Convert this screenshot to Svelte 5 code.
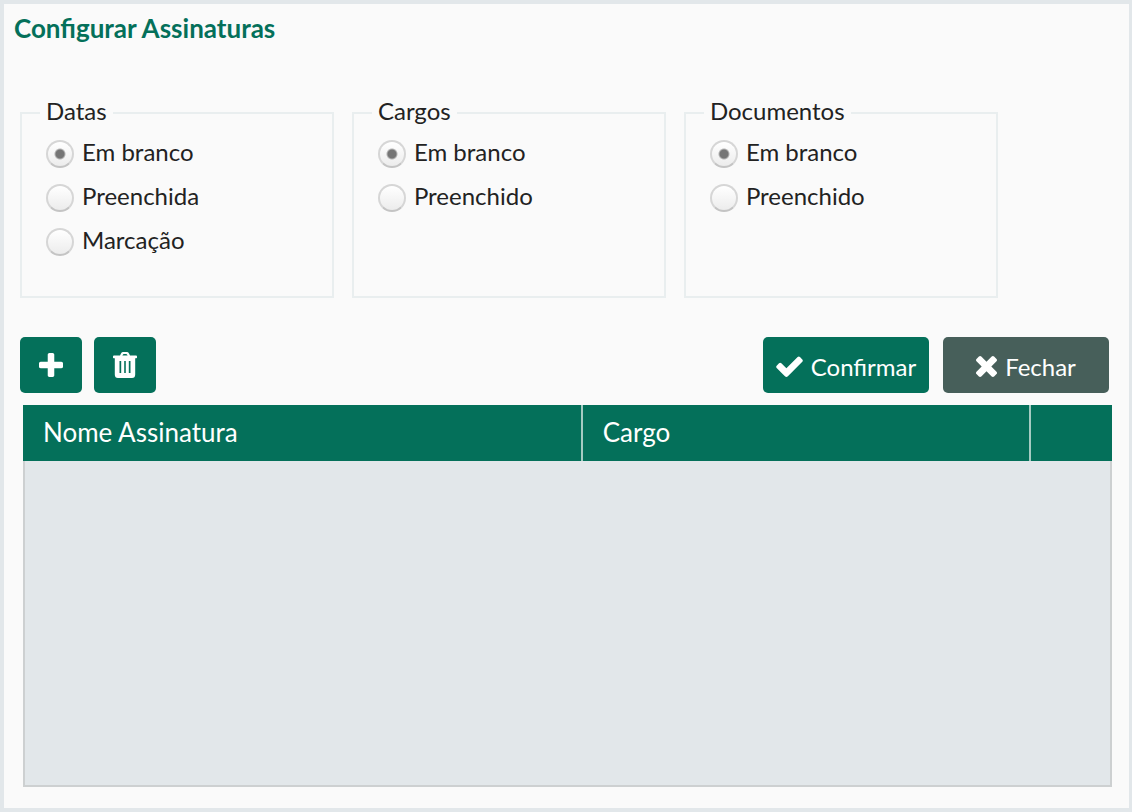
<script>
  const groups = [
    { name: 'datas', title: 'Datas', options: ['Em branco', 'Preenchida', 'Marcação'] },
    { name: 'cargos', title: 'Cargos', options: ['Em branco', 'Preenchido'] },
    { name: 'documentos', title: 'Documentos', options: ['Em branco', 'Preenchido'] }
  ];
  let selected = $state({ datas: 'Em branco', cargos: 'Em branco', documentos: 'Em branco' });
</script>

<main class="dialog">
  <h1>Configurar Assinaturas</h1>

  <div class="groups">
    {#each groups as group}
      <fieldset>
        <legend>{group.title}</legend>
        {#each group.options as option}
          <label>
            <input type="radio" name={group.name} value={option} bind:group={selected[group.name]} />
            <span>{option}</span>
          </label>
        {/each}
      </fieldset>
    {/each}
  </div>

  <div class="toolbar">
    <div class="tools">
      <button type="button" class="square" aria-label="Adicionar">
        <svg width="24" height="24" viewBox="192 128 1408 1408" aria-hidden="true"><path d="M1600 736v192q0 40-28 68t-68 28h-416v416q0 40-28 68t-68 28h-192q-40 0-68-28t-28-68v-416h-416q-40 0-68-28t-28-68v-192q0-40 28-68t68-28h416v-416q0-40 28-68t68-28h192q40 0 68 28t28 68v416h416q40 0 68 28t28 68z" /></svg>
      </button>
      <button type="button" class="square" aria-label="Excluir">
        <svg width="24" height="26" viewBox="0 0 24 26" aria-hidden="true"><path fill-rule="evenodd" d="M7 3.500L8 1.400Q8.700 0 10.200 0H13.800Q15.300 0 16 1.400L17 3.500H23Q24 3.500 24 4.500V5.500Q24 6.300 23.300 6.300H22.200V22.500Q22.200 26 19 26H5Q1.800 26 1.800 22.500V6.300H.7Q0 6.300 0 5.500V4.500Q0 3.500 1 3.500ZM9.400 3.500H14.600L14 2.400Q13.800 2 13.300 2H10.700Q10.200 2 10 2.400ZM6.500 9V21H8.200V9ZM11.200 9V21H12.800V9ZM15.800 9V21H17.500V9Z" /></svg>
      </button>
    </div>
    <div class="actions-bar">
      <button type="button" class="wide">
        <svg width="27" height="21" viewBox="121 298 1550 1224" aria-hidden="true"><path d="M1671 566q0 40-28 68l-724 724-136 136q-28 28-68 28t-68-28l-136-136-362-362q-28-28-28-68t28-68l136-136q28-28 68-28t68 28l294 295 656-657q28-28 68-28t68 28l136 136q28 28 28 68z" /></svg>
        Confirmar
      </button>
      <button type="button" class="wide close">
        <svg width="21" height="21" viewBox="302 366 1188 1188" aria-hidden="true"><path d="M1490 1322q0 40-28 68l-136 136q-28 28-68 28t-68-28l-294-294-294 294q-28 28-68 28t-68-28l-136-136q-28-28-28-68t28-68l294-294-294-294q-28-28-28-68t28-68l136-136q28-28 68-28t68 28l294 294 294-294q28-28 68-28t68 28l136 136q28 28 28 68t-28 68l-294 294 294 294q28 28 28 68z" /></svg>
        Fechar
      </button>
    </div>
  </div>

  <div class="grid">
    <table>
      <colgroup><col class="name" /><col class="role" /><col /></colgroup>
      <thead>
        <tr><th>Nome Assinatura</th><th>Cargo</th><th></th></tr>
      </thead>
      <tbody></tbody>
    </table>
  </div>
</main>

<style>
  :global(body) {
    margin: 0;
    background: #fafafa;
  }
  .dialog {
    box-sizing: border-box;
    min-height: 100vh;
    display: flex;
    flex-direction: column;
    padding: 8px 17px 21px 16px;
    border: 4px solid #e2e7ea;
    border-right-width: 3px;
    background: #fafafa;
    color: #222;
    font: 24px/32px Lato, sans-serif;
  }
  h1 {
    margin: 0 0 51px -6px;
    color: #04705a;
    font-size: 26px;
    line-height: 32px;
    font-weight: 700;
  }
  .groups {
    display: grid;
    grid-template-columns: repeat(3, 28.75%);
    gap: 18px;
  }
  fieldset {
    box-sizing: border-box;
    min-width: 0;
    min-height: 203px;
    margin: 0;
    padding: 1px 24px 32px;
    border: 2px solid #e9eeef;
  }
  legend {
    margin-left: -6px;
    padding: 0 6px 4px;
  }
  label {
    display: flex;
    align-items: center;
    gap: 8px;
    height: 44px;
  }
  label span {
    padding-bottom: 4px;
  }
  input {
    appearance: none;
    width: 28px;
    height: 28px;
    flex: none;
    margin: 0;
    border: 2px solid #d6d6d6;
    border-bottom-color: #c4c4c4;
    border-radius: 50%;
    background: linear-gradient(#fff, #ececec);
  }
  input:checked {
    background: radial-gradient(circle, #757575 4px, transparent 6px), linear-gradient(#fff, #ececec);
  }
  .toolbar {
    display: flex;
    justify-content: space-between;
    margin: 39px 3px 12px 0;
  }
  .tools {
    display: flex;
    gap: 12px;
  }
  .actions-bar {
    display: flex;
    gap: 14px;
  }
  button {
    display: flex;
    align-items: center;
    justify-content: center;
    gap: 8px;
    height: 56px;
    padding: 0;
    border: 0;
    border-radius: 5px;
    background: #04705a;
    color: #fff;
    font: inherit;
  }
  .square {
    width: 62px;
  }
  .wide {
    width: 166px;
    padding-top: 3px;
  }
  .close {
    background: #475f5a;
  }
  svg {
    fill: currentColor;
  }
  .grid {
    flex: 1;
    min-height: 200px;
    margin-left: 3px;
    border: 2px solid #cdd0d1;
    border-top: 0;
    background: #e2e7ea;
  }
  table {
    width: calc(100% + 4px);
    margin: 0 -2px;
    border-collapse: separate;
    border-spacing: 0;
    table-layout: fixed;
    background: #04705a;
    color: #fff;
  }
  .name {
    width: 51.4%;
  }
  .role {
    width: 41.2%;
  }
  th {
    height: 56px;
    box-sizing: border-box;
    padding: 0 18px 2px 20px;
    border-right: 2px solid #a5cbc2;
    font-size: 26px;
    font-weight: 400;
    text-align: left;
  }
  th:last-child {
    border-right: 0;
  }
</style>
